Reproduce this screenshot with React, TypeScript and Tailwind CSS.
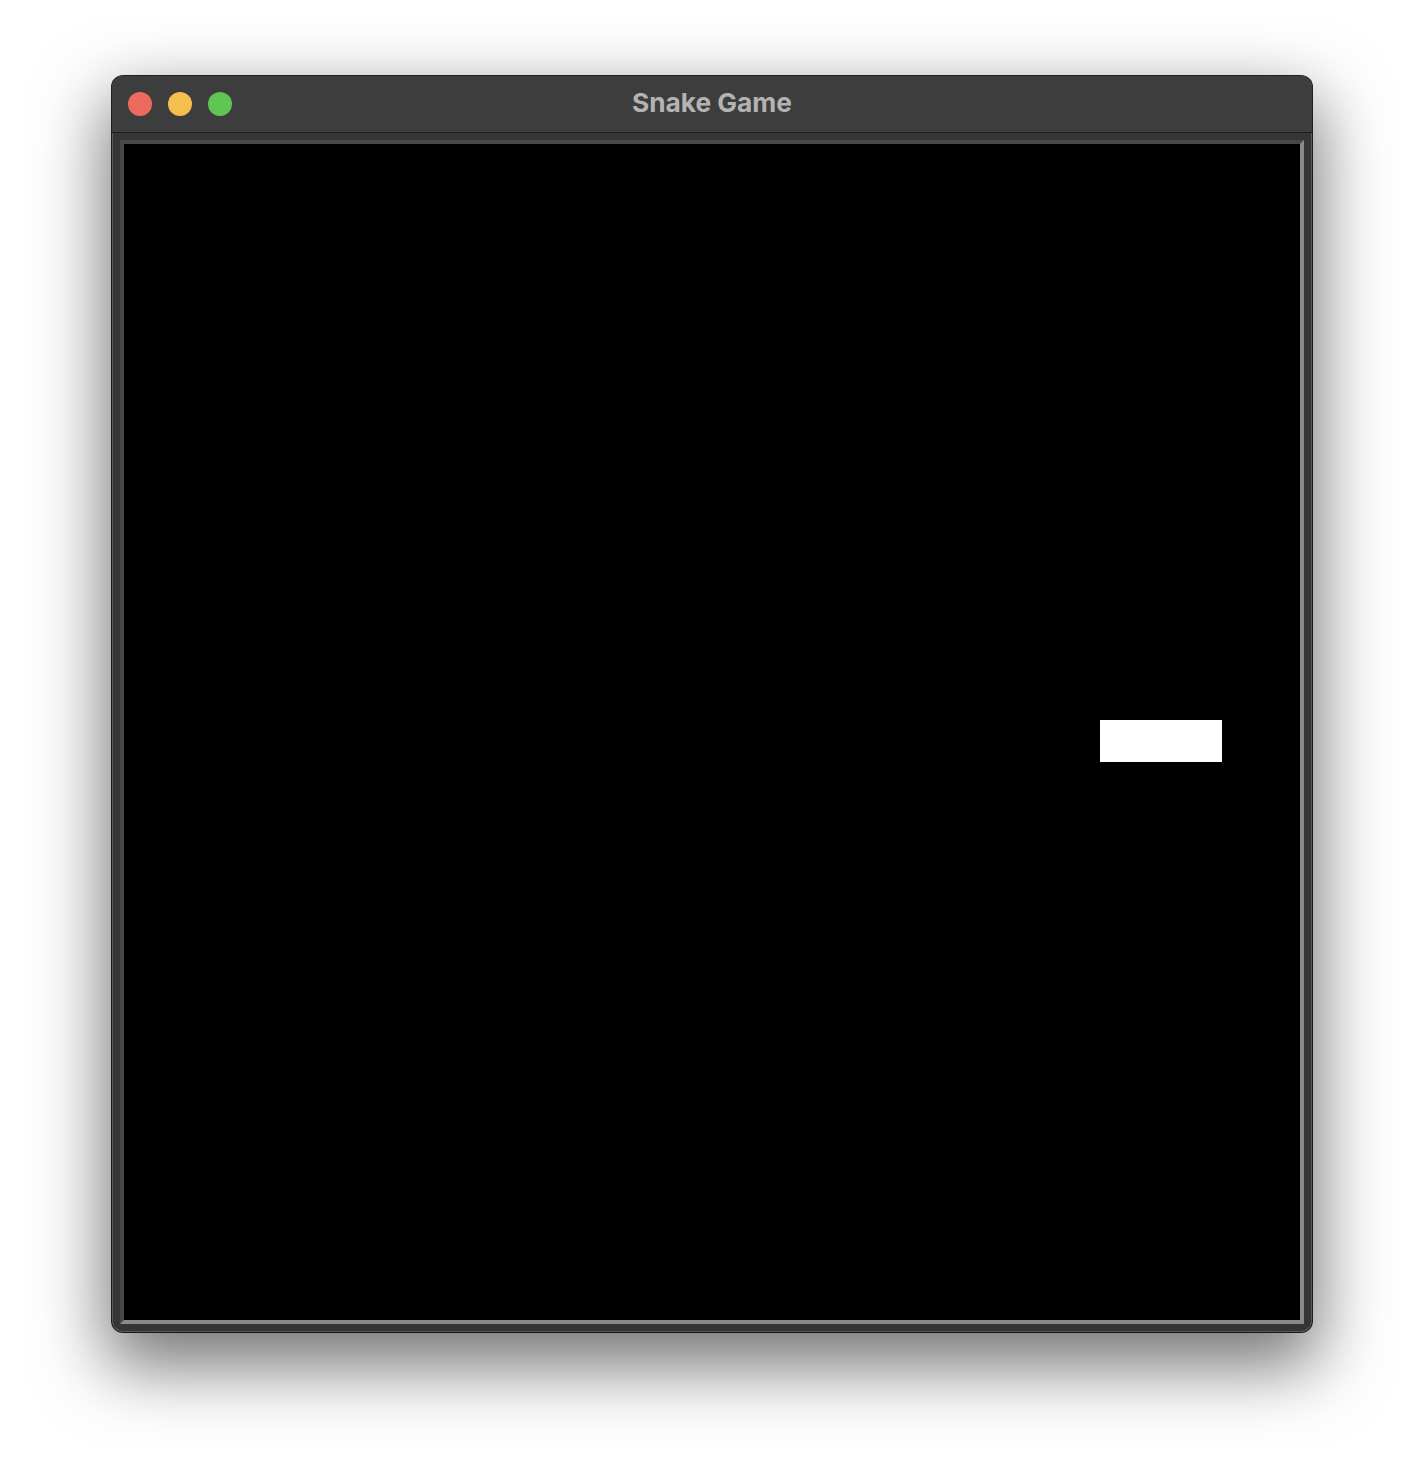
import React from "react";

export default function App() {
  return (
    <div className="w-[1424px] h-[1480px] bg-white pt-[76px]" style={{ fontFamily: "Inter, 'Noto Sans', 'Liberation Sans', sans-serif" }}>
      <div className="mx-auto w-[1200px] h-[1256px] rounded-[11px] bg-[#353535] flex flex-col overflow-hidden shadow-[0_28px_70px_6px_rgba(0,0,0,0.55),0_0_0_1px_rgba(0,0,0,0.85),inset_0_0_0_1px_rgba(255,255,255,0.18)]">
        <div className="relative h-[57px] shrink-0 bg-[#3d3d3d] border-b border-[#1e1e1e] flex items-center justify-center">
          <div className="absolute left-[16px] top-[16px] flex gap-[16px]">
            <span className="block w-[24px] h-[24px] rounded-full bg-[#ed6a5e]" />
            <span className="block w-[24px] h-[24px] rounded-full bg-[#f5bf4f]" />
            <span className="block w-[24px] h-[24px] rounded-full bg-[#61c554]" />
          </div>
          <span className="text-[26.3px] leading-none font-bold text-[#b3b3b3] mt-[-1px]">Snake Game</span>
        </div>
        <div className="flex-1 px-[8px] pt-[7px]">
          <div className="w-[1184px] h-[1184px] border-[4px] border-t-[#484848] border-l-[#484848] border-b-[#8a8a8a] border-r-[#8a8a8a]">
            <div className="relative w-full h-full bg-black">
              <div className="absolute left-[976px] top-[576px] w-[122px] h-[42px] bg-white" />
            </div>
          </div>
        </div>
      </div>
    </div>
  );
}
